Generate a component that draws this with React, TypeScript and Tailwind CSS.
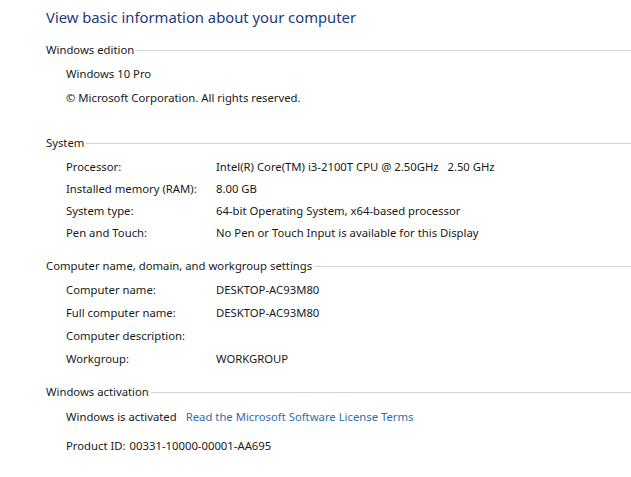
import React from 'react';

const SectionHeader = ({ title, className = '' }: { title: string; className?: string }) => (
  <div className={`flex items-center h-[22px] pl-[46px] ${className}`}>
    <span className="whitespace-nowrap">{title}</span>
    <div className="flex-1 h-px bg-[#d5d5d5] ml-[2px] mt-[1px]"></div>
  </div>
);

const Row = ({ label, value, h = 'h-[22px]' }: { label: string; value?: string; h?: string }) => (
  <div className={`flex items-center pl-[66px] ${h}`}>
    <span className="w-[150px] whitespace-nowrap">{label}</span>
    {value && <span className="whitespace-pre">{value}</span>}
  </div>
);

export default function App() {
  return (
    <div
      className="w-[631px] h-[477px] bg-white text-[11.3px] text-[#1a1a1a] overflow-hidden"
      style={{ fontFamily: '"Noto Sans", "Open Sans", sans-serif' }}
    >
      {/* Title */}
      <div className="flex items-center h-[34px] pl-[46px] text-[14.8px] text-[#1e3a78]">
        View basic information about your computer
      </div>

      {/* Windows edition */}
      <SectionHeader title="Windows edition" className="mt-[5px]" />
      <div className="mt-[1px]">
        <div className="flex items-center h-[24px] pl-[66px]">Windows 10 Pro</div>
        <div className="flex items-center h-[24px] pl-[66px]">© Microsoft Corporation. All rights reserved.</div>
      </div>

      {/* System */}
      <SectionHeader title="System" className="mt-[22px]" />
      <div className="mt-[2px]">
        <Row label="Processor:" value="Intel(R) Core(TM) i3-2100T CPU @ 2.50GHz   2.50 GHz" />
        <Row label="Installed memory (RAM):" value="8.00 GB" />
        <Row label="System type:" value="64-bit Operating System, x64-based processor" />
        <Row label="Pen and Touch:" value="No Pen or Touch Input is available for this Display" />
      </div>

      {/* Computer name */}
      <SectionHeader title="Computer name, domain, and workgroup settings" className="mt-[11px]" />
      <div className="mt-[2px]">
        <Row label="Computer name:" value="DESKTOP-AC93M80" h="h-[23px]" />
        <Row label="Full computer name:" value="DESKTOP-AC93M80" h="h-[23px]" />
        <Row label="Computer description:" h="h-[23px]" />
        <Row label="Workgroup:" value="WORKGROUP" h="h-[23px]" />
      </div>

      {/* Activation */}
      <SectionHeader title="Windows activation" className="mt-[10px]" />
      <div className="mt-[3px] flex items-center h-[22px] pl-[66px]">
        <span>Windows is activated</span>
        <span className="ml-[9px] text-[#2f6eb0]">Read the Microsoft Software License Terms</span>
      </div>
      <div className="mt-[7px] flex items-center h-[22px] pl-[66px]">
        <span>Product ID:</span>
        <span className="ml-[4px]">00331-10000-00001-AA695</span>
      </div>
    </div>
  );
}
